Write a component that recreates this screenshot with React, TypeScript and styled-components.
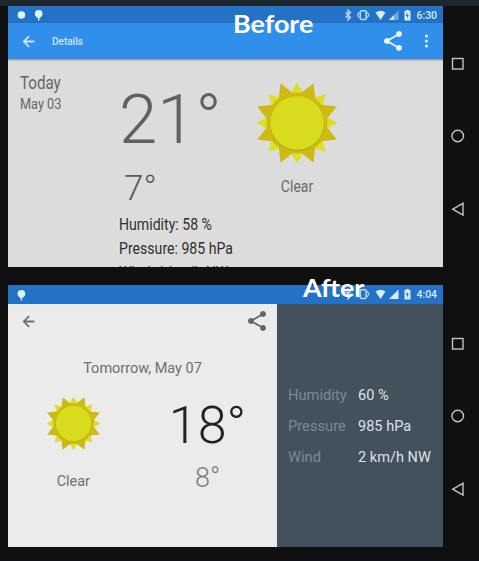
import React from "react";
import styled, { createGlobalStyle } from "styled-components";

const GlobalStyle = createGlobalStyle`
  * { box-sizing: border-box; }
  body { margin: 0; background: #101010; font-family: Roboto, "Liberation Sans", sans-serif; overflow: hidden; }
  svg { display: block; flex: none; }
`;

const Page = styled.main`
  position: relative;
  width: 479px;
  height: 561px;
  overflow: hidden;
  background: #101010;
  border-top: 6px solid #1d262e;
  border-bottom: 2px solid #0b111b;
`;

const Device = styled.section<{ $gap: number }>`
  display: flex;
  height: ${(p) => 261 + (p.$gap ? 1 : 0)}px;
  margin-top: ${(p) => p.$gap}px;
  padding-left: 8px;
`;

const Screen = styled.div`
  width: 435px;
  overflow: hidden;
  display: flex;
  flex-direction: column;
`;

const StatusBar = styled.header<{ $height: number }>`
  flex: none;
  display: flex;
  justify-content: space-between;
  height: ${(p) => p.$height}px;
  background: #2472c5;
`;

const NavBar = styled.nav<{ $top: number }>`
  display: flex;
  flex-direction: column;
  gap: 56.4px;
  padding: ${(p) => p.$top}px 0 0 7px;
`;

const Toolbar = styled.div`
  flex: none;
  display: flex;
  align-items: center;
  height: 36px;
  padding: 0 14px 0 12px;
  background: #318fec;
  box-shadow: 0 1px 2px #0006;
  z-index: 1;
`;

const ToolbarTitle = styled.h1`
  flex: 1;
  margin: 0 0 0 15px;
  font-size: 10px;
  font-weight: 500;
  color: #cfe6ff;
`;

const ToolbarActions = styled.div`
  display: flex;
  align-items: center;
  gap: 19px;
`;

const Details = styled.div`
  flex: 1;
  min-height: 0;
  display: flex;
  padding-left: 12px;
  background: #dcdcdc;
`;

const Column = styled.div<{ $width: number; $top: number; $center?: boolean }>`
  flex: none;
  display: flex;
  flex-direction: column;
  align-items: ${(p) => (p.$center ? "center" : "flex-start")};
  width: ${(p) => p.$width}px;
  padding-top: ${(p) => p.$top}px;
`;

const Label = styled.div<{
  $size: number;
  $line: number;
  $color: string;
  $weight?: number;
  $stretch?: number;
  $gap?: number;
  $indent?: number;
  $center?: boolean;
}>`
  flex: none;
  white-space: nowrap;
  font-size: ${(p) => p.$size}px;
  line-height: ${(p) => p.$line}px;
  font-weight: ${(p) => p.$weight ?? 400};
  color: ${(p) => p.$color};
  margin-top: ${(p) => p.$gap ?? 0}px;
  margin-left: ${(p) => p.$indent ?? 0}px;
  transform: scaleX(${(p) => p.$stretch ?? 1});
  transform-origin: ${(p) => (p.$center ? "center" : "left")};
`;

const Split = styled.div`
  flex: 1;
  display: flex;
`;

const Summary = styled.div`
  width: 269px;
  background: #ebebeb;
`;

const Actions = styled.div`
  display: flex;
  justify-content: space-between;
  align-items: center;
  height: 34px;
  padding: 0 8px 0 12px;
`;

const SummaryDate = styled.div`
  margin-top: 20px;
  text-align: center;
  font-size: 15px;
  line-height: 20px;
  color: #6e6e6e;
  transform: scaleX(0.965);
`;

const Forecast = styled.div`
  display: flex;
`;

const Facts = styled.dl`
  flex: 1;
  margin: 0;
  padding: 75.6px 0 0 11px;
  background: #43515d;
`;

const Fact = styled.div`
  display: grid;
  grid-template-columns: 70px 1fr;
  height: 31.3px;
  font-size: 15px;
  line-height: 31px;
  white-space: nowrap;
`;

const FactName = styled.dt`
  color: #7b8995;
  transform: scaleX(0.98);
  transform-origin: left;
`;

const FactValue = styled.dd`
  margin: 0;
  color: #dbe3e9;
  transform: scaleX(0.97);
  transform-origin: left;
`;

const Caption = styled.div<{ $x: number; $y: number }>`
  position: absolute;
  left: ${(p) => p.$x}px;
  top: ${(p) => p.$y}px;
  z-index: 2;
  font: 700 25px/32px Lato, "Open Sans", sans-serif;
  color: #fff;
  transform: scaleX(1.075);
  transform-origin: left;
`;

function spikes(offset: number, tip: number, half: number) {
  const at = (deg: number, r: number) => {
    const a = (deg * Math.PI) / 180;
    return `${(r * Math.sin(a)).toFixed(2)} ${(-r * Math.cos(a)).toFixed(2)}`;
  };
  return Array.from({ length: 8 }, (_, i) => {
    const d = offset + i * 45;
    return `M${at(d - half, 29)}L${at(d, tip)}L${at(d + half, 29)}Z`;
  }).join("");
}

const Sun = ({ size }: { size: number }) => (
  <svg width={size} height={size} viewBox="-43 -43 86 86">
    <path d={spikes(0, 40.5, 14)} fill="#dcdf25" />
    <path d={spikes(22.5, 43, 17)} fill="#cfb914" />
    <circle r="30.5" fill="#cfb914" />
    <circle cy="1" r="27.2" fill="#b9ad16" />
    <circle r="26.8" fill="#d7dd1c" />
  </svg>
);

const Back = ({ color }: { color: string }) => (
  <svg width="17" height="17" viewBox="0 0 24 24" fill={color}>
    <path d="M20 11H7.83l5.59-5.59L12 4l-8 8 8 8 1.41-1.41L7.83 13H20z" stroke={color} strokeWidth=".5" />
  </svg>
);

const Share = ({ color }: { color: string }) => (
  <svg width="24" height="24" viewBox="0 0 24 24" fill={color}>
    <path d="M18 16.08c-.76 0-1.44.3-1.96.77L8.91 12.7c.05-.23.09-.46.09-.7s-.04-.47-.09-.7l7.05-4.11c.54.5 1.25.81 2.04.81 1.66 0 3-1.34 3-3s-1.34-3-3-3-3 1.34-3 3c0 .24.04.47.09.7L8.04 9.81C7.5 9.31 6.79 9 6 9c-1.66 0-3 1.34-3 3s1.34 3 3 3c.79 0 1.5-.31 2.04-.81l7.12 4.16c-.05.21-.08.43-.08.65 0 1.61 1.31 2.92 2.92 2.92 1.61 0 2.92-1.31 2.92-2.92s-1.31-2.92-2.92-2.92z" />
  </svg>
);

const More = () => (
  <svg width="5" height="14" viewBox="0 0 5 14" fill="#e2f0ff">
    <circle cx="2.5" cy="2" r="1.5" />
    <circle cx="2.5" cy="7" r="1.5" />
    <circle cx="2.5" cy="12" r="1.5" />
  </svg>
);

const Notifications = ({ recording }: { recording?: boolean }) => (
  <svg width="40" height="18" viewBox="0 0 40 18" fill="#dff3ff">
    {recording && <circle cx="13.4" cy="9" r="3.8" />}
    <g transform={recording ? "translate(30.7 8)" : "translate(13.4 9)"}>
      <path d="M0-4a3.9 3.9 0 0 1 3.9 3.9C3.9 2 1.8 3.2.7 4.2V6.5h-1.4V4.2C-1.8 3.2-3.9 2-3.9-.1A3.9 3.9 0 0 1 0-4z" />
    </g>
  </svg>
);

const StatusIcons = ({ time, weak }: { time: string; weak?: boolean }) => (
  <svg width="100" height="18" viewBox="343 0 100 18" fill="#d8ebff">
    <path d="M345.5 6.5l5 5-2.500 2.500V4l2.500 2.500-5 5" fill="none" stroke="#b9d8f7" strokeWidth="1.3" />
    <rect x="360.300" y="4.700" width="5.800" height="8.800" rx="1" fill="none" stroke="#b5d7f8" strokeWidth="1.500" />
    <path d="M359.300 6l-1.800 3 1.800 3M367.100 6l1.800 3-1.800 3" fill="none" stroke="#a9cef3" strokeWidth="1.300" />
    <path d="M375.500 6.500q5-3.500 10 0l-5 7.500z" />
    <path d="M398.500 4.500v9.500h-9.500z" fill={weak ? "#6ea6df" : "#d8ebff"} />
    {weak && <path d="M394 9v5h-5z" />}
    <path fillRule="evenodd" d="M404.500 5h1.500v-1h3v1h1.500v9.500h-6zM407 7l-1.200 3h1.200v2.500l1.800-3.500h-1.300V7z" />
    <text x="416.500" y="13" fontFamily="Roboto, sans-serif" fontSize="10" fontWeight="500" textLength="20.500" lengthAdjust="spacingAndGlyphs">
      {time}
    </text>
  </svg>
);

const NavIcons = () => (
  <>
    <svg width="16" height="16" viewBox="0 0 16 16" fill="none" stroke="#c4c4c4" strokeWidth="1.4">
      <rect x="2.5" y="2.5" width="10.500" height="10.500" />
    </svg>
    <svg width="16" height="16" viewBox="0 0 16 16" fill="none" stroke="#c4c4c4" strokeWidth="1.4">
      <circle cx="7.7" cy="8" r="5.8" />
    </svg>
    <svg width="16" height="16" viewBox="0 0 16 16" fill="none" stroke="#c4c4c4" strokeWidth="1.4">
      <path d="M13 2.3v11.8L2.7 8.2z" />
    </svg>
  </>
);

export default function App() {
  return (
    <>
      <GlobalStyle />
      <Page>
        <Device $gap={0}>
          <Screen>
            <StatusBar $height={17}>
              <Notifications recording />
              <StatusIcons time="6:30" weak />
            </StatusBar>
            <Toolbar>
              <Back color="#d5eaff" />
              <ToolbarTitle>Details</ToolbarTitle>
              <ToolbarActions>
                <Share color="#eaf5ff" />
                <More />
              </ToolbarActions>
            </Toolbar>
            <Details>
              <Column $width={99} $top={13}>
                <Label $size={18} $line={22} $color="#666" $stretch={0.84}>Today</Label>
                <Label $size={15.5} $line={20} $color="#666" $stretch={0.82}>May 03</Label>
              </Column>
              <Column $width={125} $top={26}>
                <Label $size={69} $line={70} $color="#606060" $weight={300}>21°</Label>
                <Label $size={35} $line={36} $color="#5c5c5c" $weight={300} $gap={16} $indent={5}>7°</Label>
                <Label $size={17} $line={24} $color="#303030" $stretch={0.83} $gap={5}>Humidity: 58 %</Label>
                <Label $size={17} $line={24} $color="#303030" $stretch={0.83}>Pressure: 985 hPa</Label>
                <Label $size={17} $line={24} $color="#303030" $stretch={0.83}>Wind: 1 km/h NW</Label>
              </Column>
              <Column $width={106} $top={21} $center>
                <Sun size={86} />
                <Label $size={16.5} $line={20} $color="#6a6a6a" $stretch={0.85} $gap={11} $center>Clear</Label>
              </Column>
            </Details>
          </Screen>
          <NavBar $top={50}><NavIcons /></NavBar>
        </Device>

        <Device $gap={18}>
          <Screen>
            <StatusBar $height={19}>
              <Notifications />
              <StatusIcons time="4:04" />
            </StatusBar>
            <Split>
              <Summary>
                <Actions>
                  <Back color="#686868" />
                  <Share color="#646464" />
                </Actions>
                <SummaryDate>Tomorrow, May 07</SummaryDate>
                <Forecast>
                  <Column $width={131} $top={17} $center>
                    <Sun size={57} />
                    <Label $size={15} $line={20} $color="#707070" $stretch={0.96} $gap={19} $center>Clear</Label>
                  </Column>
                  <Column $width={137} $top={21} $center>
                    <Label $size={52} $line={54} $color="#222" $weight={300}>18°</Label>
                    <Label $size={27} $line={28} $color="#7d7d7d" $weight={300} $gap={11}>8°</Label>
                  </Column>
                </Forecast>
              </Summary>
              <Facts>
                <Fact><FactName>Humidity</FactName><FactValue>60 %</FactValue></Fact>
                <Fact><FactName>Pressure</FactName><FactValue>985 hPa</FactValue></Fact>
                <Fact><FactName>Wind</FactName><FactValue>2 km/h NW</FactValue></Fact>
              </Facts>
            </Split>
          </Screen>
          <NavBar $top={51}><NavIcons /></NavBar>
        </Device>

        <Caption $x={233} $y={1}>Before</Caption>
        <Caption $x={303} $y={265}>After</Caption>
      </Page>
    </>
  );
}
